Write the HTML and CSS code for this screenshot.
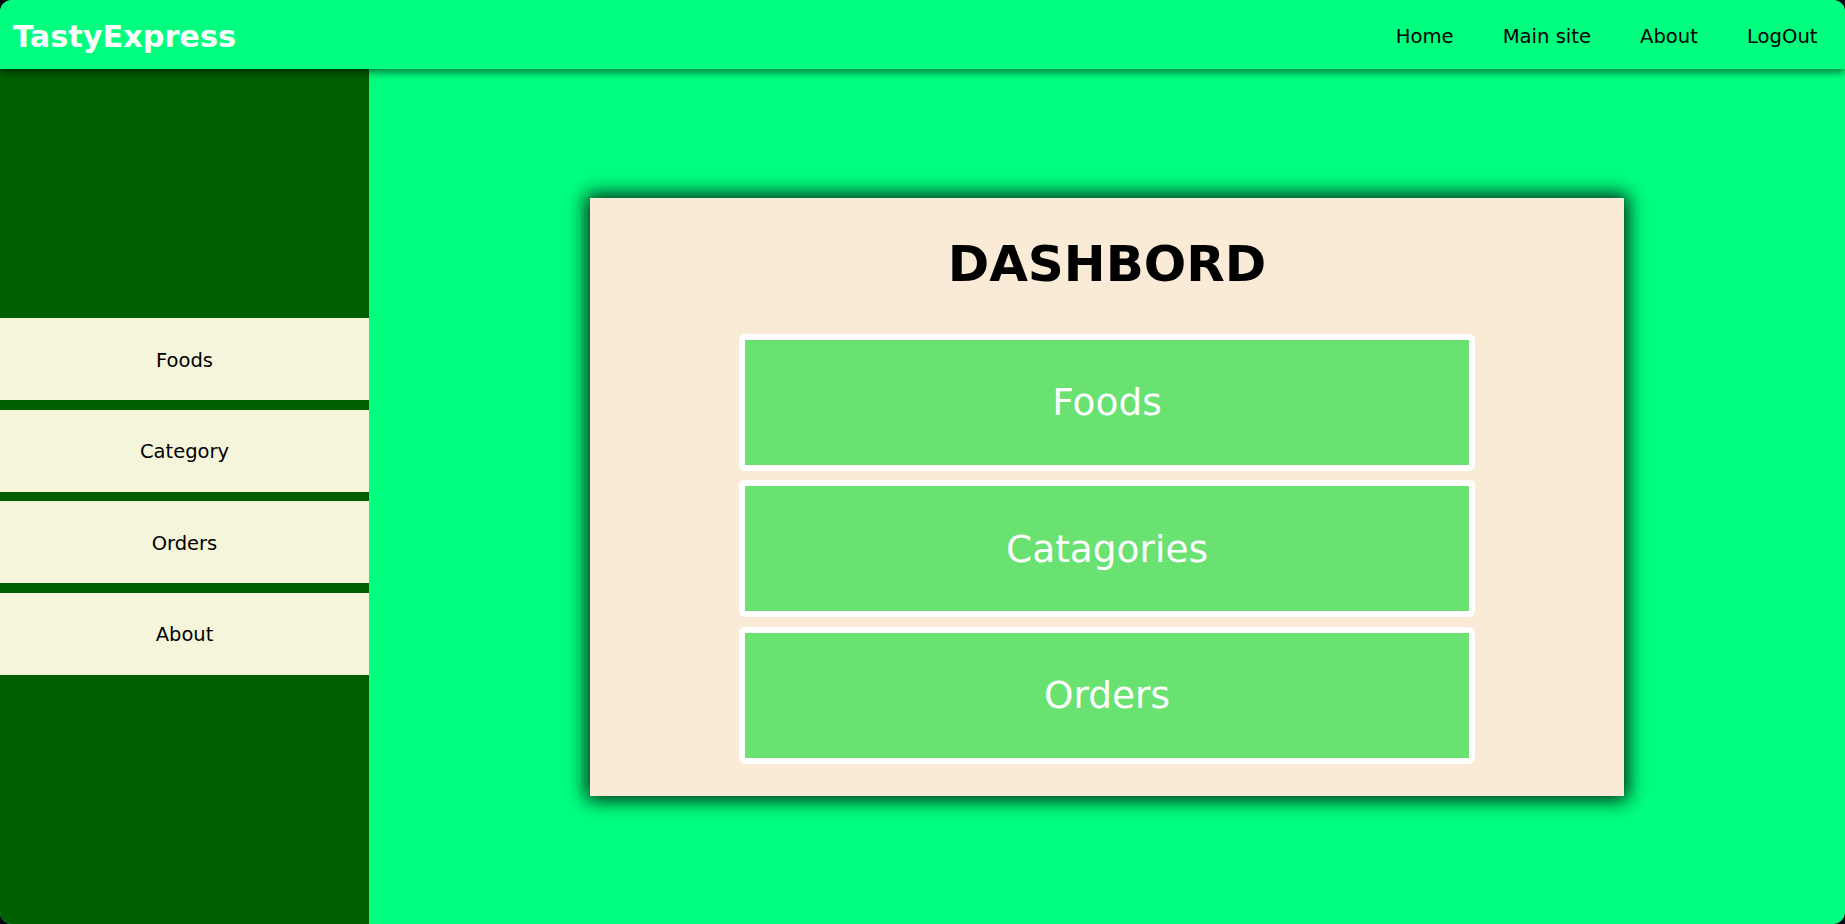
FILE: index.html
```html
<!DOCTYPE html>
<html lang="en">
<head>
<meta charset="utf-8">
<title>TastyExpress Admin</title>
<link rel="stylesheet" href="styles.css">
</head>
<body>
<div class="page">
  <header class="topbar">
    <div class="brand">TastyExpress</div>
    <nav class="topnav">
      <a href="#">Home</a>
      <a href="#">Main site</a>
      <a href="#">About</a>
      <a href="#">LogOut</a>
    </nav>
  </header>
  <div class="body">
    <aside class="sidebar">
      <a class="side-item" href="#">Foods</a>
      <a class="side-item" href="#">Category</a>
      <a class="side-item" href="#">Orders</a>
      <a class="side-item" href="#">About</a>
    </aside>
    <main class="main">
      <section class="card">
        <h1 class="title">DASHBORD</h1>
        <div class="tiles">
          <a class="tile" href="#">Foods</a>
          <a class="tile" href="#">Catagories</a>
          <a class="tile" href="#">Orders</a>
        </div>
      </section>
    </main>
  </div>
</div>
</body>
</html>
```

FILE: styles.css
```css
html, body {
  margin: 0;
  padding: 0;
  background: #050516;
  height: 100%;
}
body {
  font-family: "DejaVu Sans", Verdana, sans-serif;
}
.page {
  width: 1845px;
  height: 924px;
  border-radius: 12px;
  overflow: hidden;
  background: #00ff7f;
  display: flex;
  flex-direction: column;
}
.topbar {
  height: 69px;
  flex: 0 0 69px;
  background: #00ff7f;
  display: flex;
  align-items: center;
  justify-content: space-between;
  padding: 0 3px 0 13px;
  box-shadow: 0 3px 8px rgba(0, 0, 0, 0.55);
  position: relative;
  z-index: 2;
}
.brand {
  color: #ffffff;
  font-weight: bold;
  font-size: 30.3px;
  line-height: 1;
  margin-top: 5px;
}
.topnav {
  display: flex;
  align-items: center;
}
.topnav a {
  color: #000;
  text-decoration: none;
  font-size: 19.6px;
  padding: 0 24.5px;
  margin-top: 4px;
}
.body {
  flex: 1;
  display: flex;
  min-height: 0;
}
.sidebar {
  width: 369px;
  flex: 0 0 369px;
  background: #005f00;
  display: flex;
  flex-direction: column;
  justify-content: center;
  gap: 9.5px;
}
.side-item {
  height: 82px;
  background: #f5f5dc;
  color: #000;
  text-decoration: none;
  font-size: 19.5px;
  display: flex;
  align-items: center;
  justify-content: center;
  padding-top: 2px;
  box-sizing: border-box;
}
.main {
  flex: 1;
  display: flex;
  align-items: center;
  justify-content: center;
}
.card {
  width: 1034px;
  height: 598px;
  box-sizing: border-box;
  background: #faebd7;
  box-shadow: 0 0 18px 4px rgba(0, 0, 0, 0.85);
  display: flex;
  flex-direction: column;
  align-items: center;
  padding-top: 36px;
}
.title {
  margin: 0;
  font-size: 50px;
  line-height: 60px;
  font-weight: bold;
  color: #000;
}
.tiles {
  margin-top: 40px;
  display: flex;
  flex-direction: column;
  gap: 9.5px;
}
.tile {
  width: 736px;
  height: 137px;
  box-sizing: border-box;
  border: 6px solid #ffffff;
  border-radius: 6px;
  background: #69e271;
  color: #ffffff;
  text-decoration: none;
  font-size: 37.5px;
  display: flex;
  align-items: center;
  justify-content: center;
}
```
